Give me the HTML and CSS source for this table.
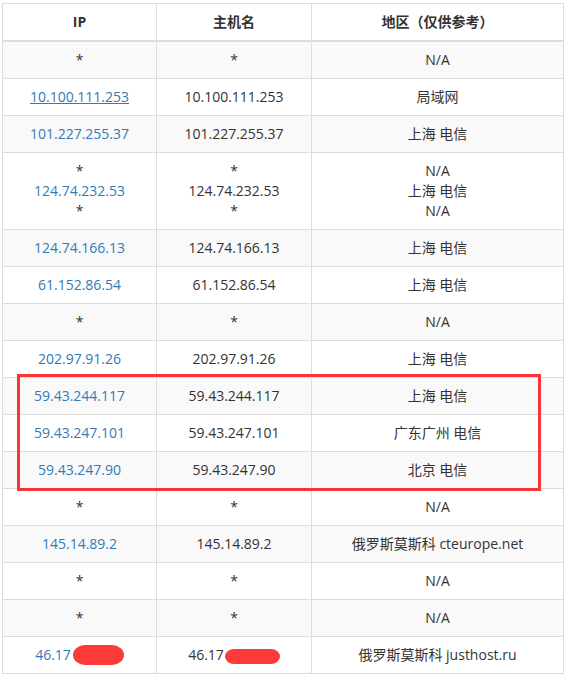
FILE: index.html
```html
<!DOCTYPE html>
<html lang="zh-CN">
<head>
<meta charset="utf-8">
<title>路由追踪</title>
<link rel="stylesheet" href="styles.css">
</head>
<body>
<table class="trace">
  <colgroup>
    <col class="c-ip">
    <col class="c-host">
    <col class="c-area">
  </colgroup>
  <thead>
    <tr><th>IP</th><th>主机名</th><th>地区（仅供参考）</th></tr>
  </thead>
  <tbody>
    <tr><td>*</td><td>*</td><td>N/A</td></tr>
    <tr><td><a class="link under" href="#">10.100.111.253</a></td><td>10.100.111.253</td><td>局域网</td></tr>
    <tr><td><a class="link" href="#">101.227.255.37</a></td><td>101.227.255.37</td><td>上海 电信</td></tr>
    <tr><td>*<br><a class="link" href="#">124.74.232.53</a><br>*</td><td>*<br>124.74.232.53<br>*</td><td>N/A<br>上海 电信<br>N/A</td></tr>
    <tr><td><a class="link" href="#">124.74.166.13</a></td><td>124.74.166.13</td><td>上海 电信</td></tr>
    <tr><td><a class="link" href="#">61.152.86.54</a></td><td>61.152.86.54</td><td>上海 电信</td></tr>
    <tr><td>*</td><td>*</td><td>N/A</td></tr>
    <tr><td><a class="link" href="#">202.97.91.26</a></td><td>202.97.91.26</td><td>上海 电信</td></tr>
    <tr class="hl-first"><td><a class="link" href="#">59.43.244.117</a></td><td>59.43.244.117</td><td>上海 电信</td></tr>
    <tr><td><a class="link" href="#">59.43.247.101</a></td><td>59.43.247.101</td><td>广东广州 电信</td></tr>
    <tr><td><a class="link" href="#">59.43.247.90</a></td><td>59.43.247.90</td><td>北京 电信</td></tr>
    <tr><td>*</td><td>*</td><td>N/A</td></tr>
    <tr><td><a class="link" href="#">145.14.89.2</a></td><td>145.14.89.2</td><td>俄罗斯莫斯科 cteurope.net</td></tr>
    <tr><td>*</td><td>*</td><td>N/A</td></tr>
    <tr><td>*</td><td>*</td><td>N/A</td></tr>
    <tr><td><a class="link" href="#">46.17</a><span class="redact r1"></span></td><td>46.17<span class="redact r2"></span></td><td>俄罗斯莫斯科 justhost.ru</td></tr>
  </tbody>
</table>
<div class="mark"></div>
</body>
</html>
```
FILE: styles.css
```css
html, body {
  margin: 0;
  padding: 0;
  background: #ffffff;
}
body {
  position: relative;
  font-family: "Open Sans", "Noto Sans CJK SC", sans-serif;
  font-size: 14px;
  line-height: 20px;
  color: #333333;
  padding: 3px 0 0 2px;
}
.trace {
  border-collapse: collapse;
  table-layout: fixed;
  width: 561px;
}
.c-ip { width: 154px; }
.c-host { width: 155px; }
.c-area { width: 252px; }
.trace th,
.trace td {
  border: 1px solid #dddddd;
  padding: 8px 8px;
  text-align: center;
  vertical-align: middle;
  white-space: nowrap;
  line-height: 20px;
}
.trace th {
  font-weight: bold;
  border-bottom-width: 2px;
  background: #ffffff;
}
.trace tbody tr:nth-child(odd) {
  background: #f9f9f9;
}
.link {
  color: #337ab7;
  text-decoration: none;
}
.link.under {
  text-decoration: underline;
}
.redact {
  display: inline-block;
  background: #fd3a3a;
  border-radius: 12px / 10px;
  vertical-align: middle;
}
.r1 {
  width: 51px;
  height: 20px;
  margin-left: 2px;
  margin-top: -2px;
}
.r2 {
  width: 55px;
  height: 15px;
  margin-left: 1px;
}
.mark {
  position: absolute;
  left: 17px;
  top: 374px;
  width: 518px;
  height: 111px;
  border: 3px solid #fb3535;
  pointer-events: none;
}
```
